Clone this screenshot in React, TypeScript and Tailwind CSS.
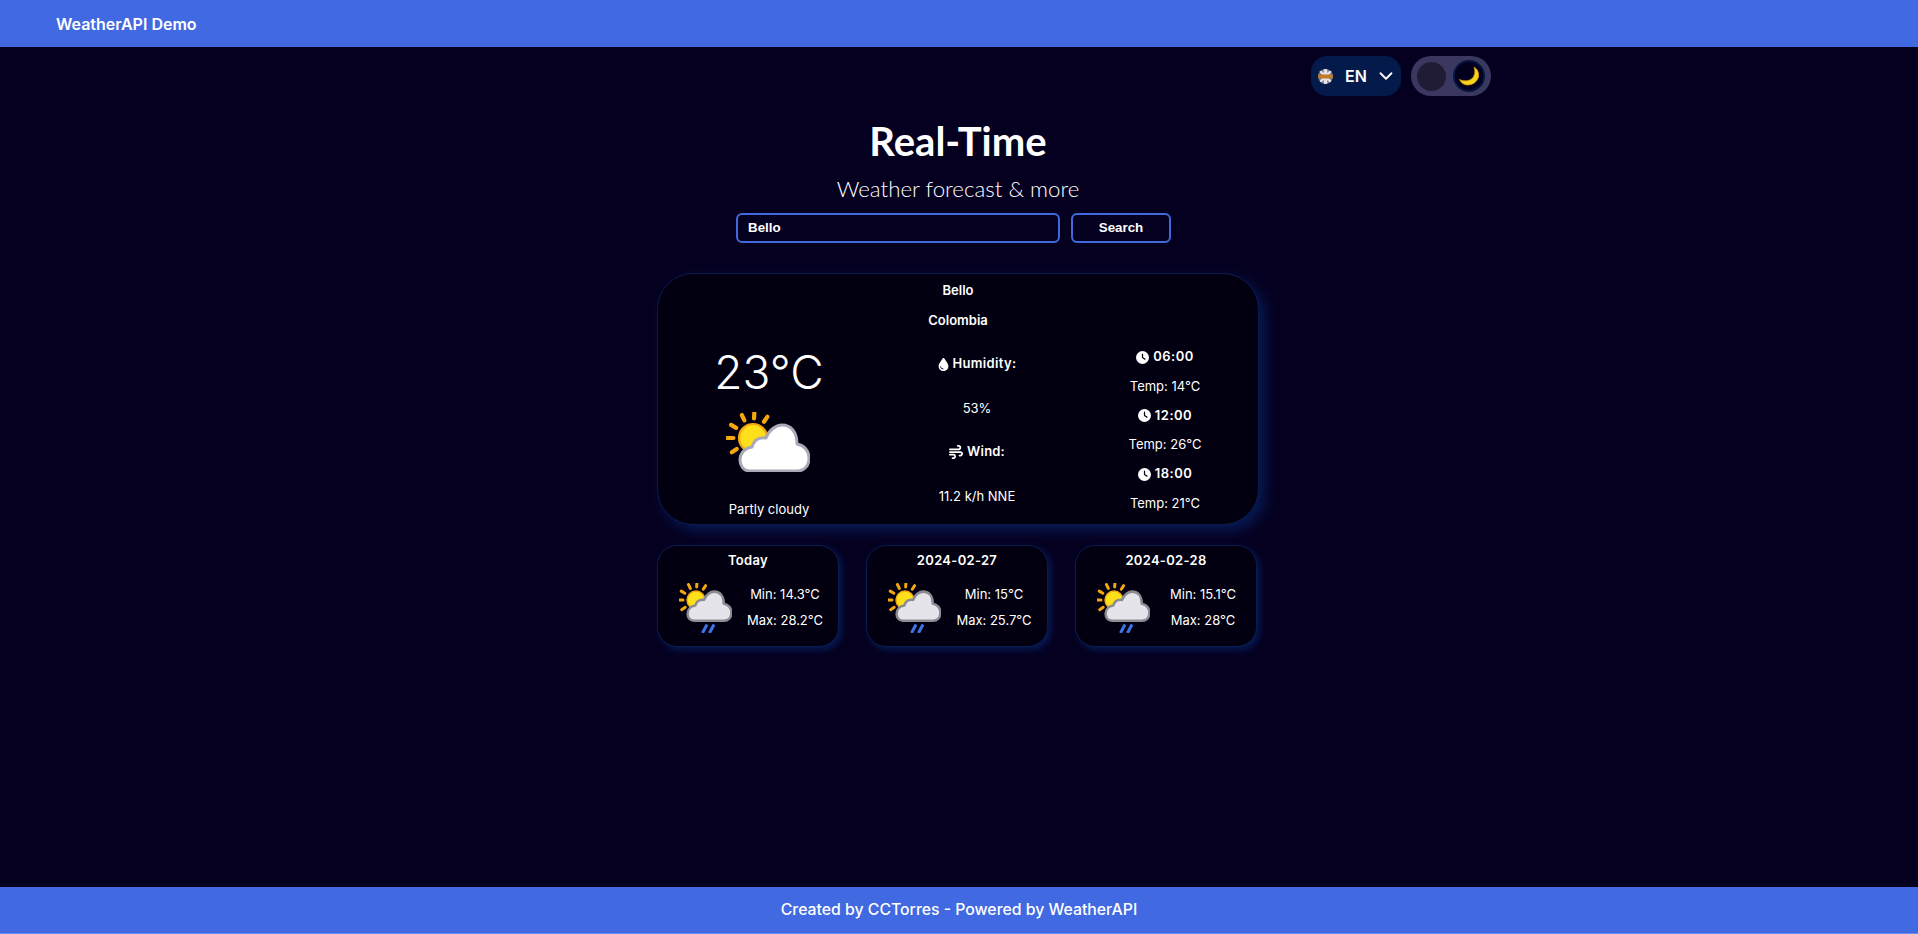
import { ChevronDown } from "lucide-react";
import { FaClock, FaDroplet, FaWind } from "react-icons/fa6";

const CLOUD =
  "M11 47C4 47 1 41 1 36C1 29 6 24 13 23C15 16 20 13 27 14C30 6 37 1 43 1C52 1 58 8 58 20C65 21 70 27 70 34C70 42 65 47 58 47Z";

function Sun({ cx, cy, r, ray }: { cx: number; cy: number; r: number; ray: number }) {
  const angles = [-87, -56, -116, -149, 180, 146];
  return (
    <g>
      {angles.map((a) => {
        const rad = (a * Math.PI) / 180;
        const inner = r + ray * 0.8;
        const outer = inner + ray * 0.85;
        return (
          <line
            key={a}
            x1={cx + Math.cos(rad) * inner}
            y1={cy + Math.sin(rad) * inner}
            x2={cx + Math.cos(rad) * outer}
            y2={cy + Math.sin(rad) * outer}
            stroke="#f5a70f"
            strokeWidth={ray * 0.6}
            strokeLinecap="round"
          />
        );
      })}
      <circle cx={cx} cy={cy} r={r} fill="#fde01a" stroke="#f5a70f" strokeWidth={r * 0.16} />
    </g>
  );
}

function PartlyCloudy() {
  return (
    <svg width="84" height="60" viewBox="0 0 84 60" aria-hidden>
      <Sun cx={27} cy={26} r={14} ray={7} />
      <g transform="translate(13 12)">
        <path d={CLOUD} fill="#ffffff" stroke="#a9a9b8" strokeWidth="3" strokeLinejoin="round" />
      </g>
    </svg>
  );
}

function RainyCloud() {
  return (
    <svg width="53" height="50" viewBox="0 0 53 50" aria-hidden>
      <Sun cx={17} cy={17} r={9} ray={5} />
      <g transform="translate(8 8) scale(0.634)">
        <path d={CLOUD} fill="#e4e4ea" stroke="#8b8b93" strokeWidth="4" strokeLinejoin="round" />
      </g>
      <path d="M28 41.5L23.5 50M35 41.5L30.5 50" stroke="#3f74e8" strokeWidth="3" />
    </svg>
  );
}

function UkFlag() {
  return (
    <svg width="15" height="15" viewBox="0 0 15 15" aria-hidden>
      <clipPath id="flag">
        <circle cx="7.5" cy="7.5" r="7.5" />
      </clipPath>
      <g clipPath="url(#flag)">
        <rect width="15" height="15" fill="#6f7390" />
        <path d="M0 0L15 15M15 0L0 15" stroke="#e4dfe2" strokeWidth="2.6" />
        <path d="M7.5 0V15" stroke="#e6e2e4" strokeWidth="3.6" />
        <rect x="0" y="5.5" width="15" height="4" fill="#c07a2a" />
      </g>
    </svg>
  );
}

function Moon() {
  return (
    <svg width="20" height="20" viewBox="0 0 20 20" aria-hidden>
      <path
        d="M15 1C18.500 3 20.500 7.500 19.500 11C18 16 13.500 19 9 19C5 19 2 17 0.500 13.500C4 15 9 15.500 12.500 13C16 10 16.500 5 15 1Z"
        fill="#f7d31e"
        stroke="#e09a12"
        strokeWidth="0.7"
      />
    </svg>
  );
}

const HOURS = [
  { time: "06:00", temp: "Temp: 14°C" },
  { time: "12:00", temp: "Temp: 26°C" },
  { time: "18:00", temp: "Temp: 21°C" },
];

const DAYS = [
  { title: "Today", min: "Min: 14.3°C", max: "Max: 28.2°C" },
  { title: "2024-02-27", min: "Min: 15°C", max: "Max: 25.7°C" },
  { title: "2024-02-28", min: "Min: 15.1°C", max: "Max: 28°C" },
];

export default function App() {
  return (
    <div className="flex min-h-screen flex-col bg-[#050020] font-['Inter',sans-serif] text-white">
      <header className="flex h-[47px] items-center bg-[#4169e1] pl-[56px] text-base font-semibold">
        WeatherAPI Demo
      </header>

      <main className="flex flex-1 flex-col items-center">
        <div className="mt-[9px] flex w-[1064px] justify-end gap-[10px]">
          <div className="flex h-[40px] w-[90px] items-center rounded-[16px] bg-[#041a4a] pl-[7px] pr-[4px]">
            <UkFlag />
            <span className="ml-[12px] text-base font-semibold">EN</span>
            <ChevronDown className="ml-auto" size={22} strokeWidth={2} />
          </div>
          <div className="flex h-[40px] w-[80px] items-center justify-between rounded-full bg-[#3a3860] pl-[6px] pr-[8px]">
            <div className="h-[29px] w-[29px] rounded-full bg-[#201c35]" />
            <div className="flex h-[28px] w-[28px] items-center justify-center rounded-full bg-[#03001e] ring-2 ring-[#05143f]">
              <Moon />
            </div>
          </div>
        </div>

        <h1 className="mt-[21px] mr-[2px] font-['Lato',sans-serif] text-[40px] leading-[48px] font-bold">Real-Time</h1>
        <p className="mt-[8px] mr-[2px] font-['Lato',sans-serif] text-[22.3px] leading-[32px] font-light">
          Weather forecast &amp; more
        </p>

        <div className="mt-[8px] mr-[11px] flex gap-[11px] font-['Liberation_Sans',sans-serif] text-[13.33px] font-bold">
          <div className="flex h-[30px] w-[324px] items-center rounded-[6px] border-2 border-[#3f69dc] pl-[10px]">
            Bello
          </div>
          <div className="flex h-[30px] w-[100px] items-center justify-center rounded-[6px] border-2 border-[#3f69dc]">
            Search
          </div>
        </div>

        <section className="mt-[30px] mr-[2px] h-[252px] w-[602px] rounded-[36px] border border-[#0a1c4e] bg-[#020010] text-[13px] shadow-[6px_6px_14px_#071a55]">
          <div className="relative grid h-full grid-cols-[222px_194px_182px]">
            <div className="absolute inset-x-0 top-[7px] flex flex-col items-center gap-[11px] leading-[19px] font-semibold">
              <div>Bello</div>
              <div>Colombia</div>
            </div>

            <div className="flex flex-col items-center pt-[73px]">
              <div className="text-[46px] leading-[50px] font-light">23°C</div>
              <div className="mt-[15px] -ml-[2px]">
                <PartlyCloudy />
              </div>
              <div className="mt-[28px] leading-[19px]">Partly cloudy</div>
            </div>

            <div className="flex flex-col items-center pt-[80px]">
              <div className="flex h-[20px] items-center gap-[2px] font-semibold tracking-[0.35px]">
                <FaDroplet size={13} />
                Humidity:
              </div>
              <div className="mt-[24px] h-[20px] leading-[20px]">53%</div>
              <div className="mt-[24px] flex h-[20px] items-center gap-[4px] font-semibold tracking-[0.2px]">
                <FaWind size={14} />
                Wind:
              </div>
              <div className="mt-[24px] h-[20px] leading-[20px]">11.2 k/h NNE</div>
            </div>

            <div className="flex flex-col items-center pt-[73px]">
              {HOURS.map((h) => (
                <div key={h.time} className="flex h-[58.5px] flex-col items-center">
                  <div className="flex h-[20px] items-center gap-[4px] font-semibold tracking-[0.5px]">
                    <FaClock size={13} />
                    {h.time}
                  </div>
                  <div className="mt-[9.5px] leading-[19px]">{h.temp}</div>
                </div>
              ))}
            </div>
          </div>
        </section>

        <div className="mt-[20px] mr-[2px] flex w-[602px] gap-[27px]">
          {DAYS.map((d) => (
            <div
              key={d.title}
              className="flex h-[102px] w-[182px] flex-col rounded-[20px] border border-[#0a1c4e] bg-[#020010] text-[13px] shadow-[3px_3px_7px_#071a55]"
            >
              <div className="mt-[5px] text-center leading-[19px] font-semibold tracking-[0.3px]">{d.title}</div>
              <div className="mt-[13px] flex items-start pl-[21px]">
                <RainyCloud />
                <div className="flex flex-1 flex-col items-center gap-[7px] pt-[2px] leading-[19px]">
                  <div>{d.min}</div>
                  <div>{d.max}</div>
                </div>
              </div>
            </div>
          ))}
        </div>
      </main>

      <footer className="flex h-[47px] items-center justify-center border-b border-[#6a8cf0] bg-[#4169e1] text-[15.8px] font-medium">
        Created by CCTorres - Powered by WeatherAPI
      </footer>
    </div>
  );
}
